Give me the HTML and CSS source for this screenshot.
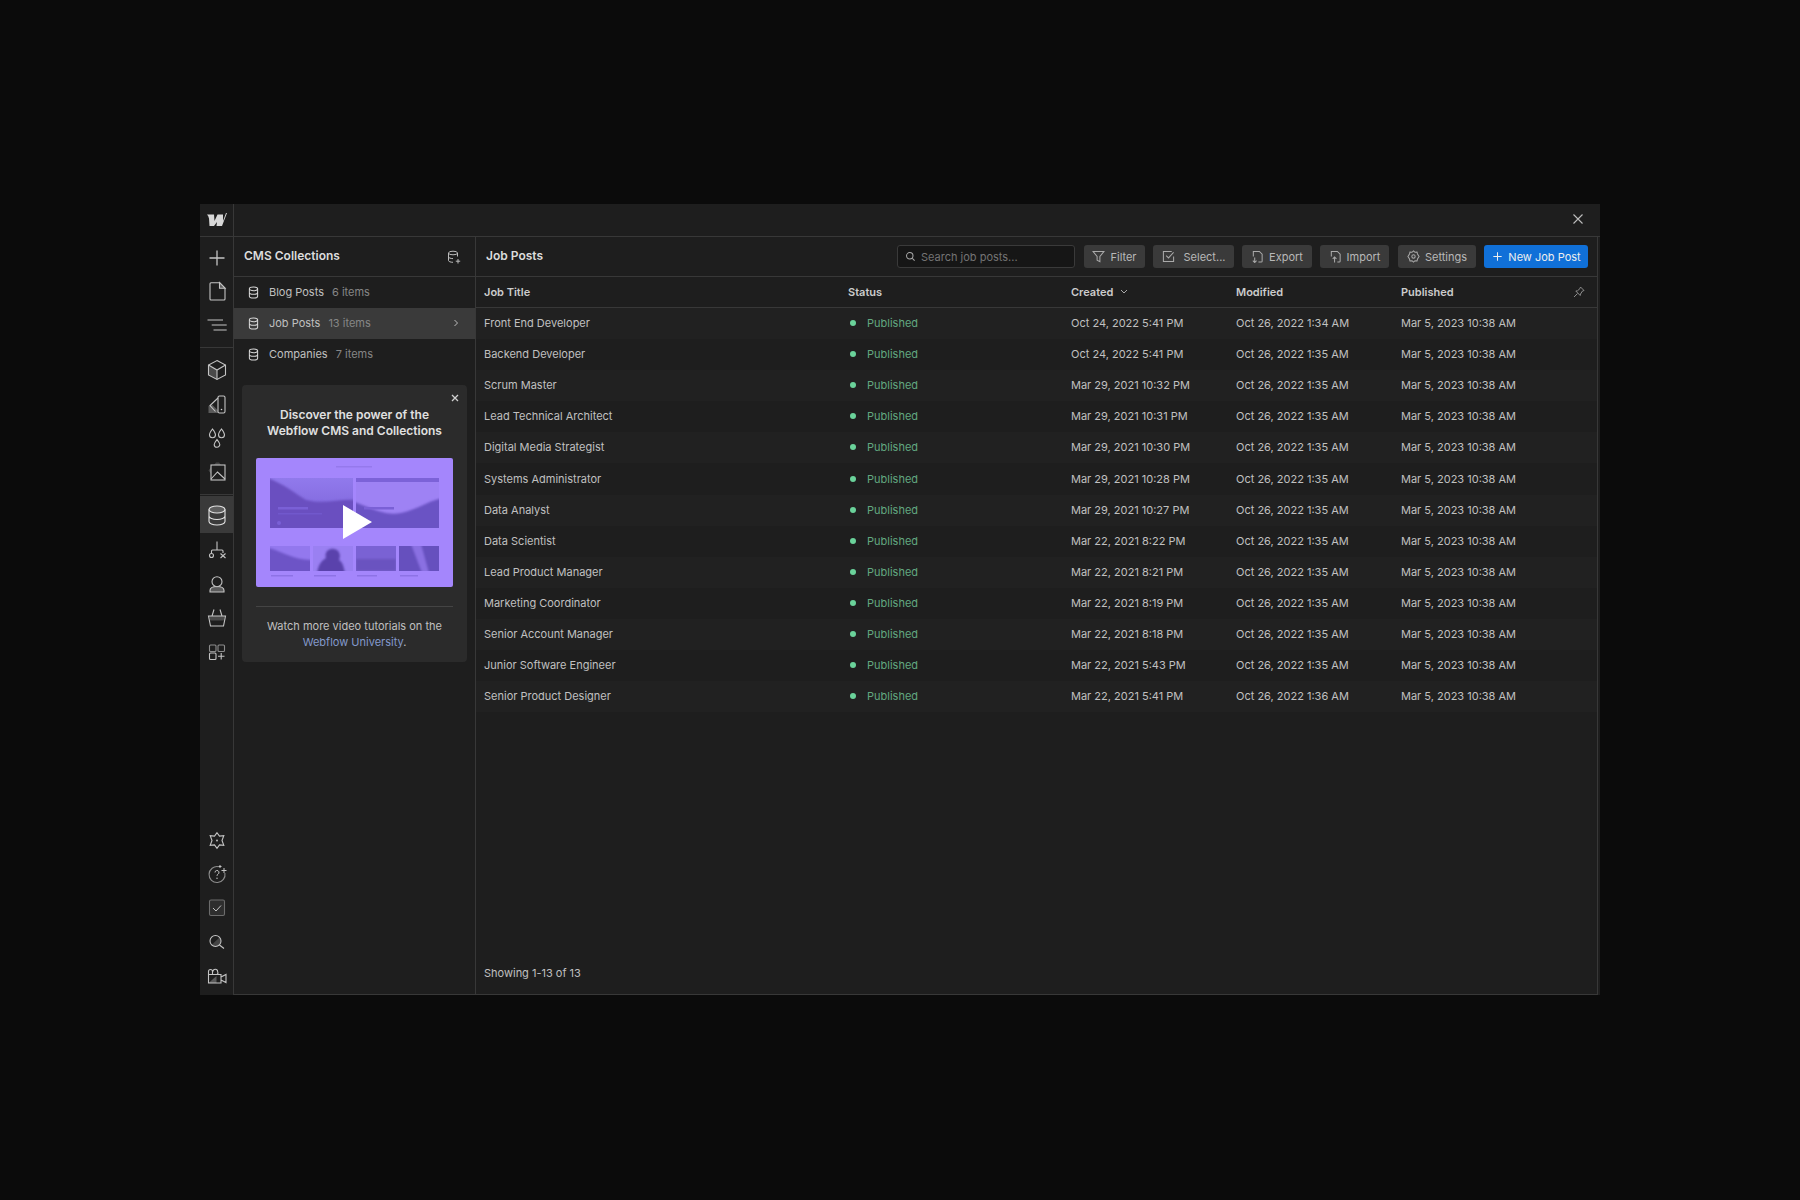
FILE: index.html
```html
<!DOCTYPE html>
<html>
<head>
    <title>CMS Collections</title>
    <link rel="stylesheet" href="styles.css">
</head>
<body>
    <div class="window">
        <div class="topbar">
            <div class="logo-box">
                <svg class="logo" width="20" height="13" viewBox="0 0 20 13"><path fill="#d8d8d8" d="M0 1.500H7L7.500 8 10.500 1.500H16L16 8 19 0H20L15 13H9.500L10 9 7 13H2.500L2 5.500Q1.500 3 0 1.500Z"/></svg>
            </div>
            <button class="close-btn">
                <svg width="12" height="12" viewBox="0 0 12 12"><path d="M1.5 1.5l9 9M10.5 1.5l-9 9" stroke="#bdbdbd" stroke-width="1.1" fill="none"/></svg>
            </button>
        </div>

        <div class="content">
            <div class="rail">
                <div class="rail-item">
                    <svg class="ico" viewBox="0 0 24 24"><path d="M12 5.500v15M4.500 13h15" stroke-width="1.3"/></svg>
                </div>
                <div class="rail-item">
                    <svg class="ico" viewBox="0 0 24 24"><path d="M14.500 3.700 20 9.200v10.800a1 1 0 0 1-1 1H6a1 1 0 0 1-1-1V4.700a1 1 0 0 1 1-1z"/><path d="M14.500 3.700v5.500H20z" fill="#5c5c5c"/></svg>
                </div>
                <div class="rail-item">
                    <svg class="ico" viewBox="0 0 24 24"><path d="M2.500 7h15.500M6.700 12h15M8.500 17h13.200" stroke-width="1.2"/></svg>
                </div>
                <div class="rail-line"></div>
                <div class="rail-item">
                    <svg class="ico" viewBox="0 0 24 24"><path d="M3.500 7 12 12v9.500L3.500 17z" fill="#4a4a4a" stroke="none"/><path d="M12 2.500 20.500 7v10L12 21.500 3.500 17V7z"/><path d="M3.500 7 12 12l8.500-5M12 12v9.500"/></svg>
                </div>
                <div class="rail-item">
                    <svg class="ico" viewBox="0 0 24 24"><path d="M3.500 21v-7l4-1 5.500 5.500V21z" fill="#5a5a5a" stroke="none"/><rect x="13" y="4" width="7" height="17" rx="1.500"/><path d="M13 6 5 13.500l5.500 6"/><circle cx="16.500" cy="17.500" r=".8" fill="#d0d0d0" stroke="none"/></svg>
                </div>
                <div class="rail-item">
                    <svg class="ico" viewBox="0 0 24 24"><path d="M7.500 3C9.500 5.500 10.500 7 10.500 8.800a3 3 0 0 1-6 0C4.500 7 5.500 5.500 7.500 3zM16.500 3C18.500 5.500 19.500 7 19.500 8.800a3 3 0 0 1-6 0C13.500 7 14.500 5.500 16.500 3zM12 13.500c1.800 2.300 2.800 3.500 2.800 5a2.800 2.800 0 0 1-5.600 0c0-1.500 1-2.700 2.800-5z"/></svg>
                </div>
                <div class="rail-item">
                    <svg class="ico" viewBox="0 0 24 24"><path d="M9 5l2-2.500h3l2 2.500zM6 7 3.500 10.500 6 14z" fill="#444444" stroke="none"/><rect x="6" y="5" width="14" height="15"/><path d="M6 19l6.500-7 7.500 7"/></svg>
                </div>
                <div class="rail-line rail-line-tight"></div>
                <div class="rail-item rail-active">
                    <svg class="ico ico-bright" viewBox="0 0 24 24"><ellipse cx="12" cy="6.500" rx="8" ry="3.500" fill="#5e5e5e"/><path d="M4 6.500v12c0 1.900 3.600 3.500 8 3.500s8-1.600 8-3.500v-12M4 13c0 1.900 3.600 3.500 8 3.500s8-1.600 8-3.500"/></svg>
                </div>
                <div class="rail-item">
                    <svg class="ico" viewBox="0 0 24 24"><path d="M12 3.500V12M6.500 15v-2a1 1 0 0 1 1-1h9.500a1 1 0 0 1 1 1v2"/><circle cx="6.500" cy="17.500" r="2"/><path d="M15.500 15.500l5 4.500M20.500 15.500l-5 4.500"/></svg>
                </div>
                <div class="rail-item">
                    <svg class="ico" viewBox="0 0 24 24"><path d="M5 20v-1.500c0-2.500 3-4 7-4s7 1.500 7 4V20z" fill="#5a5a5a"/><circle cx="12" cy="9.700" r="5" fill="#1e1e1e"/></svg>
                </div>
                <div class="rail-item">
                    <svg class="ico" viewBox="0 0 24 24"><path d="M4.200 10h15.600l-1 4.500H5.200z" fill="#4a4a4a" stroke="none"/><path d="M3.500 10h17l-2 10h-13zM7 10l2-6.500M17 10l-2-6.500"/></svg>
                </div>
                <div class="rail-item">
                    <svg class="ico" viewBox="0 0 24 24"><rect x="4.500" y="5" width="6.500" height="6.500" rx="1" stroke="#8c8c8c"/><rect x="13" y="5" width="6.500" height="6.500" rx="1" stroke="#8c8c8c"/><rect x="4.500" y="13" width="6.500" height="6.500" rx="1"/><path d="M16.200 13v6.500M13 16.200h6.500"/></svg>
                </div>

                <div class="rail-bottom">
                    <div class="rail-item">
                        <svg class="ico" viewBox="0 0 24 24"><path d="M12 4.700l2.500 3.470 4.300-.42L17 12.500l1.800 4.750-4.300-.42L12 20.300l-2.500-3.470-4.300.42L7 12.500 5.200 7.750l4.300.42z"/><circle cx="12" cy="12.500" r=".9" fill="#c8c8c8" stroke="none"/></svg>
                    </div>
                    <div class="rail-item">
                        <svg class="ico" viewBox="0 0 24 24"><path d="M13.500 4.700A8 8 0 1 0 19.900 11" stroke="#8c8c8c"/><path d="M10 10.500a2 2 0 1 1 3 1.700c-.7.400-1 .9-1 1.600" stroke-width="1"/><circle cx="12" cy="16.300" r=".7" fill="#c8c8c8" stroke="none"/><path d="M19 6v5M16.500 8.500h5M15 3v3M13.500 4.500h3" stroke-width="1"/></svg>
                    </div>
                    <div class="rail-item">
                        <svg class="ico" viewBox="0 0 24 24"><rect x="4.500" y="4" width="15" height="15.500" rx="1.500" stroke="#6c6c6c" fill="#2e2e2e"/><path d="M8 12l3 3 5-5.500" stroke-width="1"/></svg>
                    </div>
                    <div class="rail-item">
                        <svg class="ico" viewBox="0 0 24 24"><path d="M6.500 15 14.500 7.500a5.500 5.500 0 0 1-8 7.500z" fill="#444444" stroke="none"/><circle cx="10.500" cy="11" r="5.500"/><path d="M14.500 15l4.500 3.500"/></svg>
                    </div>
                    <div class="rail-item">
                        <svg class="ico" viewBox="0 0 24 24"><path d="M3.500 19l8-7v7z" fill="#5a5a5a" stroke="none"/><path d="M3.500 10.500h12.500V19H3.500zM16 13l5-2.500v8l-5-2.500"/><path d="M3.500 10.500V7.500a2 2 0 0 1 4 0v3M8 7.500a2.300 2.300 0 0 1 4.600 0 2.300 2.300 0 0 1-.5 3"/></svg>
                    </div>
                </div>
            </div>

            <div class="panel">
                <div class="panel-head">
                    <span class="panel-title">CMS Collections</span>
                    <svg class="add-db" viewBox="0 0 14 14"><ellipse cx="6" cy="3" rx="4.500" ry="1.800"/><path d="M1.500 3v7.500c0 1 2 1.800 4.500 1.800M10.500 3v3.500M1.500 6.800c0 1 2 1.800 4.500 1.800"/><path d="M11 9v4.500M8.800 11.200h4.400"/></svg>
                </div>
                <div class="coll">
                    <svg class="db-ico" viewBox="0 0 12 14"><ellipse cx="6" cy="3" rx="4.500" ry="2"/><path d="M1.500 3v8c0 1.100 2 2 4.500 2s4.500-.9 4.500-2V3M1.500 7c0 1.100 2 2 4.500 2s4.500-.9 4.500-2"/></svg>
                    <span class="coll-name">Blog Posts</span>
                    <span class="coll-count">6 items</span>
                </div>
                <div class="coll coll-active">
                    <svg class="db-ico" viewBox="0 0 12 14"><ellipse cx="6" cy="3" rx="4.500" ry="2"/><path d="M1.500 3v8c0 1.100 2 2 4.500 2s4.500-.9 4.500-2V3M1.500 7c0 1.100 2 2 4.500 2s4.500-.9 4.500-2"/></svg>
                    <span class="coll-name">Job Posts</span>
                    <span class="coll-count">13 items</span>
                    <svg class="chev" viewBox="0 0 6 8"><path d="M1.500 1l3 3-3 3"/></svg>
                </div>
                <div class="coll">
                    <svg class="db-ico" viewBox="0 0 12 14"><ellipse cx="6" cy="3" rx="4.500" ry="2"/><path d="M1.500 3v8c0 1.100 2 2 4.500 2s4.500-.9 4.500-2V3M1.500 7c0 1.100 2 2 4.500 2s4.500-.9 4.500-2"/></svg>
                    <span class="coll-name">Companies</span>
                    <span class="coll-count">7 items</span>
                </div>

                <div class="promo">
                    <svg class="promo-close" viewBox="0 0 8 8"><path d="M1 1l6 6M7 1 1 7"/></svg>
                    <h3>Discover the power of the<br>Webflow CMS and Collections</h3>
                    <svg class="thumb" viewBox="0 0 197 129">
                        <defs>
                            <filter id="soft"><feGaussianBlur stdDeviation="1"/></filter>
                            <linearGradient id="sky" x1="0" y1="0" x2="0" y2="1">
                                <stop offset="0" stop-color="#917aec"/>
                                <stop offset="1" stop-color="#7a60d6"/>
                            </linearGradient>
                        </defs>
                        <rect width="197" height="129" rx="2" fill="#a486fc"/>
                        <rect x="80" y="8" width="36" height="1.500" fill="#9579ec"/>
                        <svg x="14" y="20" width="83" height="50">
                            <rect width="83" height="50" fill="url(#sky)"/>
                            <path filter="url(#soft)" d="M-2 0C14 6 26 16 36 22 56 27 70 20 86 22V54H-2Z" fill="#6a50c0"/>
                            <rect x="8" y="29" width="30" height="2.500" fill="#7a60d6"/>
                            <rect x="8" y="35" width="44" height="1.500" fill="#7158cc"/>
                            <circle cx="9" cy="45" r="2" fill="#7a60d6"/>
                        </svg>
                        <svg x="100" y="20" width="83" height="50">
                            <rect width="83" height="50" fill="#9e82f4"/>
                            <rect width="83" height="4" fill="#7c62d8"/>
                            <path filter="url(#soft)" d="M-2 24C16 30 28 38 45 35 60 32 70 24 86 20V54H-2Z" fill="#6b52c4"/>
                            <rect x="8" y="29" width="30" height="2.500" fill="#7a60d6"/>
                        </svg>
                        <svg x="14" y="88" width="40" height="25">
                            <rect width="40" height="25" fill="#6d54c6"/>
                            <path filter="url(#soft)" d="M-2 2C10 4 22 14 42 14V-2H-2Z" fill="#9378ee"/>
                        </svg>
                        <svg x="57" y="88" width="40" height="25">
                            <rect width="40" height="25" fill="#9a80f2"/>
                            <path filter="url(#soft)" d="M4 27C6 16 10 14 13 12 11 6 16 2 21 3 27 4 28 10 26 14 30 16 31 22 32 27Z" fill="#5a43ac"/>
                        </svg>
                        <svg x="100" y="88" width="40" height="25">
                            <rect width="40" height="25" fill="#7a62d4"/>
                            <rect y="13" width="40" height="12" fill="#6a52c0" filter="url(#soft)"/>
                        </svg>
                        <svg x="143" y="88" width="40" height="25">
                            <rect width="40" height="25" fill="#6650be"/>
                            <path filter="url(#soft)" d="M12 -2l10 0 8 29h-7z" fill="#8a70e2"/>
                        </svg>
                        <rect x="15" y="117" width="22" height="1.500" fill="#8d72e6"/>
                        <rect x="58" y="117" width="22" height="1.500" fill="#8d72e6"/>
                        <rect x="101" y="117" width="20" height="1.500" fill="#8d72e6"/>
                        <rect x="144" y="117" width="18" height="1.500" fill="#8d72e6"/>
                        <path d="M87 47l29 17-29 17z" fill="#fff"/>
                    </svg>
                    <div class="promo-rule"></div>
                    <p>Watch more video tutorials on the<br><a href="#">Webflow University</a>.</p>
                </div>
            </div>

            <div class="main">
                <div class="main-head">
                    <span class="main-title">Job Posts</span>
                    <div class="search">
                        <svg class="btn-ico" viewBox="0 0 12 12"><circle cx="5.200" cy="5.200" r="3.500"/><path d="M8 8l2.500 2.500"/></svg>
                        <span>Search job posts...</span>
                    </div>
                    <button class="btn btn-filter">
                        <svg class="btn-ico big" viewBox="0 0 14 14"><path d="M1 1.500h12L8.500 7v5.500L5.500 11V7z"/></svg>Filter
                    </button>
                    <button class="btn btn-select">
                        <svg class="btn-ico big" viewBox="0 0 14 14"><path d="M12.500 7v5.500h-11v-11h9"/><path d="M4.500 6l2.500 2.500 5.500-6"/></svg>Select...
                    </button>
                    <button class="btn btn-export">
                        <svg class="btn-ico big" viewBox="0 0 14 14"><path d="M2.500 7V1.500h6.500l3 3V12a1 1 0 0 1-1 1H8M4 8v5.500M2 11.500l2 2 2-2"/></svg>Export
                    </button>
                    <button class="btn btn-import">
                        <svg class="btn-ico big" viewBox="0 0 14 14"><path d="M2.500 7V1.500h6.500l3 3V12a1 1 0 0 1-1 1H9M6 13.500V7.500M4 9.500l2-2 2 2"/></svg>Import
                    </button>
                    <button class="btn btn-settings">
                        <svg class="btn-ico big" viewBox="0 0 14 14"><path d="M7 1l1.600 1.500 2.200-.3.500 2.100L13 7l-1.700 2.700-.5 2.100-2.200-.3L7 13l-1.600-1.500-2.200.3-.5-2.100L1 7l1.700-2.700.5-2.100 2.200.3z"/><circle cx="7" cy="7" r="1.800"/></svg>Settings
                    </button>
                    <button class="btn btn-primary">
                        <svg class="btn-ico big" viewBox="0 0 14 14"><path d="M7 2.500v9M2.500 7h9"/></svg>New Job Post
                    </button>
                </div>

                <div class="row row-head">
                    <span>Job Title</span>
                    <span>Status</span>
                    <span class="sorted">Created <svg class="sort" viewBox="0 0 8 5"><path d="M1 1l3 3 3-3"/></svg></span>
                    <span>Modified</span>
                    <span class="last-head">Published
                        <svg class="pin" viewBox="0 0 12 12"><path d="M7.500 1 11 4.500 9.500 5 7.500 8l-.3 1.500L2.800 5 4.500 4.800 7 2.500zM4.500 7.500 1 11"/></svg>
                    </span>
                </div>

                <div class="row"><span>Front End Developer</span><span class="status">Published</span><span>Oct 24, 2022 5:41 PM</span><span>Oct 26, 2022 1:34 AM</span><span>Mar 5, 2023 10:38 AM</span></div>
                <div class="row"><span>Backend Developer</span><span class="status">Published</span><span>Oct 24, 2022 5:41 PM</span><span>Oct 26, 2022 1:35 AM</span><span>Mar 5, 2023 10:38 AM</span></div>
                <div class="row"><span>Scrum Master</span><span class="status">Published</span><span>Mar 29, 2021 10:32 PM</span><span>Oct 26, 2022 1:35 AM</span><span>Mar 5, 2023 10:38 AM</span></div>
                <div class="row"><span>Lead Technical Architect</span><span class="status">Published</span><span>Mar 29, 2021 10:31 PM</span><span>Oct 26, 2022 1:35 AM</span><span>Mar 5, 2023 10:38 AM</span></div>
                <div class="row"><span>Digital Media Strategist</span><span class="status">Published</span><span>Mar 29, 2021 10:30 PM</span><span>Oct 26, 2022 1:35 AM</span><span>Mar 5, 2023 10:38 AM</span></div>
                <div class="row"><span>Systems Administrator</span><span class="status">Published</span><span>Mar 29, 2021 10:28 PM</span><span>Oct 26, 2022 1:35 AM</span><span>Mar 5, 2023 10:38 AM</span></div>
                <div class="row"><span>Data Analyst</span><span class="status">Published</span><span>Mar 29, 2021 10:27 PM</span><span>Oct 26, 2022 1:35 AM</span><span>Mar 5, 2023 10:38 AM</span></div>
                <div class="row"><span>Data Scientist</span><span class="status">Published</span><span>Mar 22, 2021 8:22 PM</span><span>Oct 26, 2022 1:35 AM</span><span>Mar 5, 2023 10:38 AM</span></div>
                <div class="row"><span>Lead Product Manager</span><span class="status">Published</span><span>Mar 22, 2021 8:21 PM</span><span>Oct 26, 2022 1:35 AM</span><span>Mar 5, 2023 10:38 AM</span></div>
                <div class="row"><span>Marketing Coordinator</span><span class="status">Published</span><span>Mar 22, 2021 8:19 PM</span><span>Oct 26, 2022 1:35 AM</span><span>Mar 5, 2023 10:38 AM</span></div>
                <div class="row"><span>Senior Account Manager</span><span class="status">Published</span><span>Mar 22, 2021 8:18 PM</span><span>Oct 26, 2022 1:35 AM</span><span>Mar 5, 2023 10:38 AM</span></div>
                <div class="row"><span>Junior Software Engineer</span><span class="status">Published</span><span>Mar 22, 2021 5:43 PM</span><span>Oct 26, 2022 1:35 AM</span><span>Mar 5, 2023 10:38 AM</span></div>
                <div class="row"><span>Senior Product Designer</span><span class="status">Published</span><span>Mar 22, 2021 5:41 PM</span><span>Oct 26, 2022 1:36 AM</span><span>Mar 5, 2023 10:38 AM</span></div>

                <div class="showing">Showing 1-13 of 13</div>
            </div>
        </div>
    </div>
</body>
</html>
```

FILE: styles.css
```css
* {
    box-sizing: border-box;
}

body {
    margin: 0;
    padding-top: 204px;
    min-height: 1200px;
    background-color: #0b0b0b;
    font-family: Inter, "Liberation Sans", sans-serif;
    font-size: 11px;
    color: #d4d4d4;
}

.window {
    width: 1400px;
    height: 791px;
    margin: 0 auto;
    background-color: #1e1e1e;
    display: flex;
    flex-direction: column;
}

.topbar {
    height: 33px;
    flex: none;
    display: flex;
    align-items: center;
    justify-content: space-between;
    border-bottom: 1px solid #383838;
    padding-right: 16px;
}

.logo-box {
    width: 34px;
    height: 32px;
    display: flex;
    align-items: center;
    justify-content: center;
    border-right: 1px solid #383838;
}

.logo {
    margin-bottom: 2px;
}

.close-btn {
    padding: 0;
    margin-bottom: 2px;
    background: none;
    border: none;
    display: flex;
}

.content {
    flex: 1;
    display: flex;
    min-height: 0;
}

/* left icon rail */
.rail {
    width: 34px;
    flex: none;
    display: flex;
    flex-direction: column;
    padding-top: 3px;
    padding-bottom: 2px;
    border-right: 1px solid #383838;
}

.rail-item {
    height: 34px;
    flex: none;
    display: flex;
    align-items: center;
    justify-content: center;
}

.rail-active {
    height: 37px;
    background-color: #3a3a3a;
}

.rail-line {
    height: 1px;
    flex: none;
    background-color: #383838;
    margin: 5px 0;
}

.rail-line-tight {
    margin: 5px 0 1px;
}

.rail-bottom {
    margin-top: auto;
}

.ico {
    width: 24px;
    height: 24px;
    fill: none;
    stroke: #c4c4c4;
    stroke-width: 1.1;
}

.ico-bright {
    stroke: #e2e2e2;
}

/* collections panel */
.panel {
    width: 242px;
    flex: none;
    border-right: 1px solid #383838;
    border-bottom: 1px solid #383838;
}

.panel-head {
    height: 40px;
    display: flex;
    align-items: center;
    justify-content: space-between;
    padding: 0 14px 0 10px;
    border-bottom: 1px solid #383838;
}

.panel-title {
    margin-bottom: 2px;
    font-size: 12px;
    font-weight: 600;
    color: #dcdcdc;
}

.add-db {
    width: 14px;
    height: 14px;
    fill: none;
    stroke: #bcbcbc;
    stroke-width: 1;
}

.coll {
    height: 31px;
    display: flex;
    align-items: center;
    padding: 0 9px 1px 14px;
}

.coll-active {
    background-color: #3a3a3a;
}

.db-ico {
    width: 11px;
    height: 13px;
    margin-right: 10px;
    fill: none;
    stroke: #d8d8d8;
    stroke-width: 1.1;
}

.coll-name {
    color: #c0c0c0;
    margin-right: 8px;
}

.coll-count {
    color: #868686;
}

.chev {
    width: 6px;
    height: 8px;
    margin-left: auto;
    margin-right: 7px;
    fill: none;
    stroke: #bcbcbc;
    stroke-width: 1;
}

.promo {
    position: relative;
    margin: 15px 8px 0;
    width: 225px;
    height: 277px;
    padding: 22px 14px 0;
    background-color: #2b2b2b;
    border-radius: 4px;
    text-align: center;
}

.promo-close {
    position: absolute;
    top: 9px;
    right: 8px;
    width: 8px;
    height: 8px;
    fill: none;
    stroke: #d0d0d0;
    stroke-width: 1.3;
}

.promo h3 {
    margin: 0;
    font-size: 12px;
    font-weight: 600;
    line-height: 16px;
    color: #e0e0e0;
}

.thumb {
    display: block;
    width: 197px;
    height: 129px;
    margin-top: 19px;
}

.promo-rule {
    height: 1px;
    margin-top: 19px;
    background-color: #444444;
}

.promo p {
    margin: 12px 0 0;
    line-height: 15.5px;
    color: #c0c0c0;
}

.promo a {
    color: #8399cc;
    text-decoration: none;
}

/* job posts table */
.main {
    flex: 1;
    min-width: 0;
    margin-right: 2px;
    display: flex;
    flex-direction: column;
    border-right: 1px solid #383838;
    border-bottom: 1px solid #383838;
}

.main-head {
    height: 40px;
    flex: none;
    display: flex;
    align-items: center;
    padding: 0 9px 0 10px;
    border-bottom: 1px solid #383838;
}

.main-title {
    margin-bottom: 2px;
    font-size: 12px;
    font-weight: 600;
    color: #dcdcdc;
    margin-right: auto;
}

.search {
    width: 178px;
    height: 23px;
    margin-right: 9px;
    display: flex;
    align-items: center;
    padding-left: 7px;
    background-color: #161616;
    border: 1px solid #3a3a3a;
    border-radius: 3px;
    color: #747474;
}

.search span {
    margin-left: 5px;
}

.btn {
    height: 23px;
    margin-left: 8px;
    padding: 0;
    display: flex;
    align-items: center;
    justify-content: center;
    font-family: inherit;
    font-size: 11px;
    color: #b8b8b8;
    background-color: #3a3a3a;
    border: none;
    border-radius: 3px;
}

.btn-filter {
    margin-left: 0;
    width: 61px;
}

.btn-select {
    width: 81px;
}

.btn-export {
    width: 70px;
}

.btn-import {
    width: 69px;
}

.btn-settings {
    width: 78px;
    margin-left: 9px;
}

.btn-primary {
    width: 104px;
    background-color: #1070d8;
    color: #eeeeee;
}

.btn-ico {
    width: 11px;
    height: 11px;
    flex: none;
    fill: none;
    stroke: #aaaaaa;
    stroke-width: 1.1;
}

.btn-ico.big {
    width: 13px;
    height: 13px;
    margin-right: 5px;
}

.btn-select .btn-ico.big {
    margin-right: 9px;
}

.btn-primary .btn-ico.big {
    stroke: #eeeeee;
    margin-right: 4px;
}

.row {
    height: 31.1px;
    flex: none;
    display: grid;
    grid-template-columns: 364px 223px 165px 165px 1fr;
    align-items: center;
    padding: 0 0 1px 8px;
    color: #c0c0c0;
}

.row:nth-of-type(odd) {
    background-color: #212121;
}

.row-head {
    height: 31px;
    font-weight: 600;
    color: #cccccc;
    border-bottom: 1px solid #383838;
}

.sorted {
    display: flex;
    align-items: center;
}

.sort {
    width: 8px;
    height: 5px;
    margin-left: 7px;
    fill: none;
    stroke: #aaaaaa;
    stroke-width: 1;
}

.last-head {
    display: flex;
    align-items: center;
    justify-content: space-between;
    padding-right: 12px;
}

.pin {
    width: 12px;
    height: 12px;
    fill: none;
    stroke: #8c8c8c;
    stroke-width: 1;
}

.status {
    display: flex;
    align-items: center;
    color: #62a880;
}

.status::before {
    content: "";
    width: 6px;
    height: 6px;
    margin-left: 2px;
    margin-right: 11px;
    border-radius: 50%;
    background-color: #6ad29a;
}

.showing {
    margin-top: auto;
    padding: 0 0 14px 8px;
    color: #c0c0c0;
}
```
